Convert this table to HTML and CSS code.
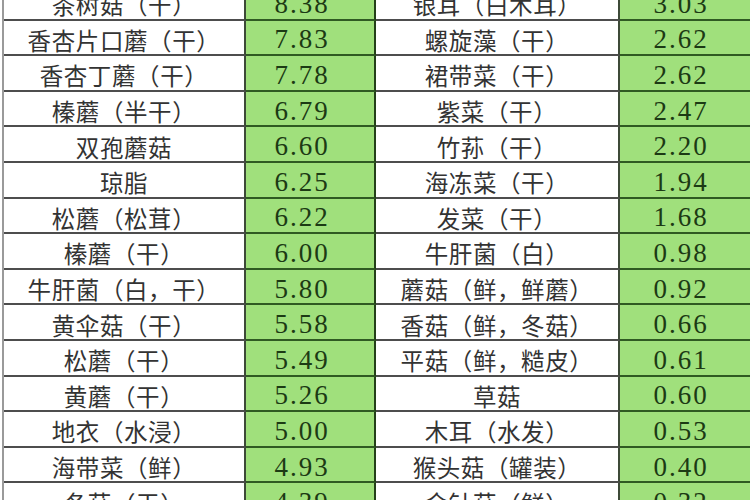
FILE: index.html
```html
<!DOCTYPE html>
<html lang="zh">
<head>
<meta charset="utf-8">
<link rel="stylesheet" href="styles.css">
</head>
<body>
<div class="sheet">
  <div class="name">茶树菇（干）</div><div class="val">8.38</div><div class="name">银耳（白木耳）</div><div class="val">3.03</div>
  <div class="name">香杏片口蘑（干）</div><div class="val">7.83</div><div class="name">螺旋藻（干）</div><div class="val">2.62</div>
  <div class="name">香杏丁蘑（干）</div><div class="val">7.78</div><div class="name">裙带菜（干）</div><div class="val">2.62</div>
  <div class="name">榛蘑（半干）</div><div class="val">6.79</div><div class="name">紫菜（干）</div><div class="val">2.47</div>
  <div class="name">双孢蘑菇</div><div class="val">6.60</div><div class="name">竹荪（干）</div><div class="val">2.20</div>
  <div class="name">琼脂</div><div class="val">6.25</div><div class="name">海冻菜（干）</div><div class="val">1.94</div>
  <div class="name">松蘑（松茸）</div><div class="val">6.22</div><div class="name">发菜（干）</div><div class="val">1.68</div>
  <div class="name">榛蘑（干）</div><div class="val">6.00</div><div class="name">牛肝菌（白）</div><div class="val">0.98</div>
  <div class="name">牛肝菌（白，干）</div><div class="val">5.80</div><div class="name">蘑菇（鲜，鲜蘑）</div><div class="val">0.92</div>
  <div class="name">黄伞菇（干）</div><div class="val">5.58</div><div class="name">香菇（鲜，冬菇）</div><div class="val">0.66</div>
  <div class="name">松蘑（干）</div><div class="val">5.49</div><div class="name">平菇（鲜，糙皮）</div><div class="val">0.61</div>
  <div class="name">黄蘑（干）</div><div class="val">5.26</div><div class="name">草菇</div><div class="val">0.60</div>
  <div class="name">地衣（水浸）</div><div class="val">5.00</div><div class="name">木耳（水发）</div><div class="val">0.53</div>
  <div class="name">海带菜（鲜）</div><div class="val">4.93</div><div class="name">猴头菇（罐装）</div><div class="val">0.40</div>
  <div class="name">冬菇（干）</div><div class="val">4.39</div><div class="name">金针菇（鲜）</div><div class="val">0.32</div>
</div>
</body>
</html>
```
FILE: styles.css
```css
html, body {
  margin: 0;
  padding: 0;
  background: #ffffff;
  overflow: hidden;
}

.sheet {
  display: grid;
  grid-template-columns: 242px 130px 244px 140px;
  grid-auto-rows: 35.6px;
  margin-top: -15px;
  margin-left: 2px;
  border-left: 2px solid #9a9a9a;
  width: 760px;
}

.name,
.val {
  box-sizing: border-box;
  display: flex;
  align-items: center;
  justify-content: center;
  border-bottom: 2px solid #4d4d4d;
  border-right: 2px solid #3d4a38;
  padding-top: 5px;
  white-space: nowrap;
}

.name {
  font-family: "Noto Sans CJK SC", sans-serif;
  font-size: 23.5px;
  color: #333333;
  letter-spacing: 0.6px;
}

.val {
  background: #a0e07c;
  border-bottom-color: #2f5a22;
  border-right-color: #24401a;
  font-family: "Liberation Serif", serif;
  font-size: 27px;
  color: #1c3a14;
  letter-spacing: 2px;
  padding-right: 16px;
}
```
